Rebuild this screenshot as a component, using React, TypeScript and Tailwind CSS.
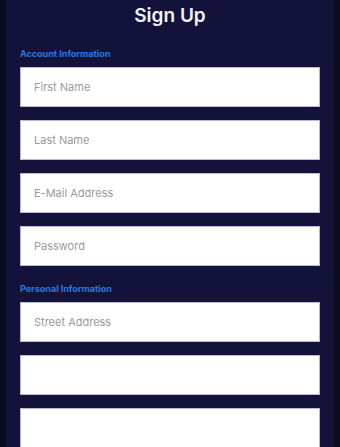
const font = { fontFamily: 'Inter, "Noto Sans", sans-serif' };

function Field({ placeholder = '' }: { placeholder?: string }) {
  return (
    <input
      type="text"
      placeholder={placeholder}
      className="block w-full h-10 bg-white border border-[#b9b8d6] px-[13px] text-[11px] text-[#333] placeholder:text-[#9a9a9a] outline-none"
    />
  );
}

function SectionLabel({ children }: { children: string }) {
  return <p className="text-[9px] font-bold text-[#2a78e4] leading-none">{children}</p>;
}

export default function App() {
  return (
    <div className="w-[340px] h-[447px] overflow-hidden bg-[#0b0b1f] px-[6px]" style={font}>
      <div className="h-full bg-[#13123a] px-[14px]">
        <h1 className="pt-[5px] text-center text-[19px] font-semibold text-[#f1f1f7] leading-[22px]">Sign Up</h1>

        <div className="mt-[22px]">
          <SectionLabel>Account Information</SectionLabel>
          <div className="mt-[9px] flex flex-col gap-[13px]">
            <Field placeholder="First Name" />
            <Field placeholder="Last Name" />
            <Field placeholder="E-Mail Address" />
            <Field placeholder="Password" />
          </div>
        </div>

        <div className="mt-[18px]">
          <SectionLabel>Personal Information</SectionLabel>
          <div className="mt-[9px] flex flex-col gap-[13px]">
            <Field placeholder="Street Address" />
            <Field />
            <Field />
          </div>
        </div>
      </div>
    </div>
  );
}
